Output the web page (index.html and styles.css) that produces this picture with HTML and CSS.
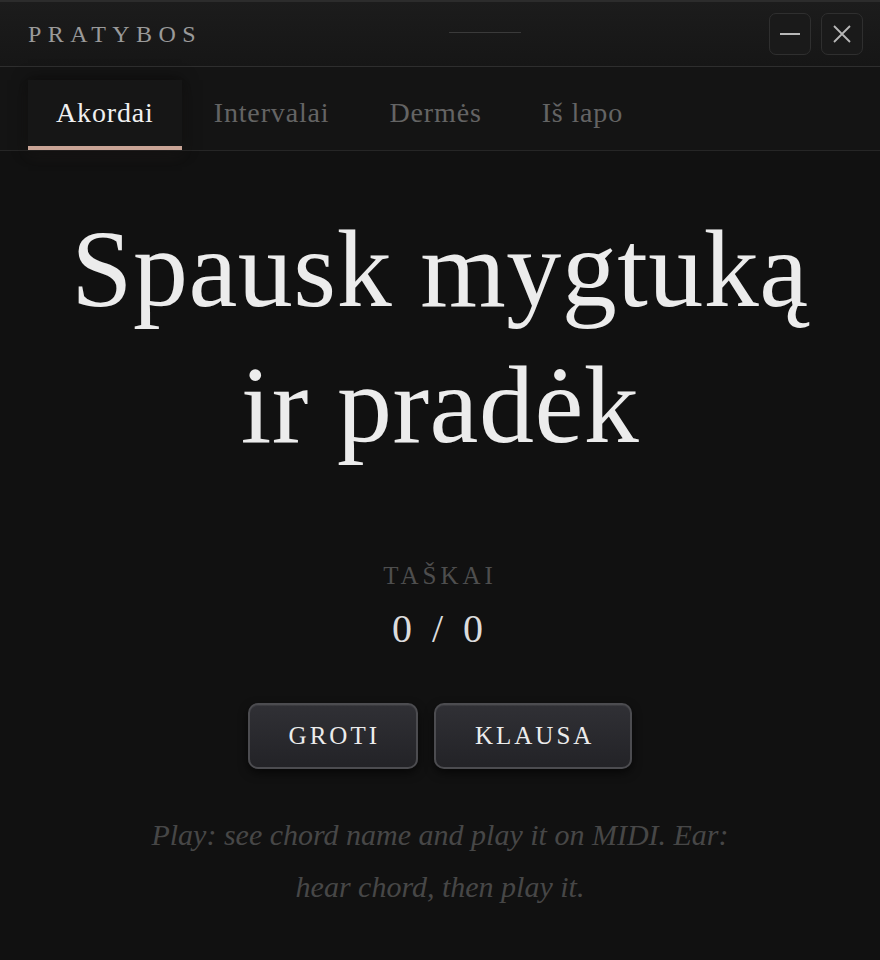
FILE: index.html
```html
<!DOCTYPE html>
<html lang="lt">
<head>
<meta charset="utf-8">
<title>Pratybos</title>
<link rel="stylesheet" href="styles.css">
</head>
<body>
<div class="window">
  <header class="titlebar">
    <div class="app-title">PRATYBOS</div>
    <div class="drag"><span class="drag-line"></span></div>
    <div class="win-controls">
      <button class="win-btn" aria-label="Minimize">
        <svg width="22" height="22" viewBox="0 0 22 22"><line x1="1" y1="11" x2="21" y2="11" stroke="#b8b8b8" stroke-width="2"/></svg>
      </button>
      <button class="win-btn" aria-label="Close">
        <svg width="22" height="22" viewBox="0 0 22 22"><path d="M3 3 L19 19 M19 3 L3 19" stroke="#b8b8b8" stroke-width="1.8" fill="none"/></svg>
      </button>
    </div>
  </header>
  <nav class="tabs">
    <div class="tab active">Akordai</div>
    <div class="tab">Intervalai</div>
    <div class="tab">Dermės</div>
    <div class="tab">Iš lapo</div>
  </nav>
  <main class="content">
    <h1 class="prompt">Spausk mygtuką<br>ir pradėk</h1>
    <div class="score">
      <div class="score-label">TAŠKAI</div>
      <div class="score-value">0 / 0</div>
    </div>
    <div class="actions">
      <button class="action">GROTI</button>
      <button class="action">KLAUSA</button>
    </div>
    <p class="hint">Play: see chord name and play it on MIDI. Ear: hear chord, then play it.</p>
  </main>
</div>
</body>
</html>
```
FILE: styles.css
```css
* { box-sizing: border-box; }
html, body {
  margin: 0;
  padding: 0;
  background: #111111;
  height: 100%;
}
body {
  font-family: "Liberation Serif", "Times New Roman", serif;
  color: #e8e8e8;
}
.window {
  min-height: 960px;
  background: #111111;
  border-top: 2px solid #2c2c2c;
  display: flex;
  flex-direction: column;
}
.titlebar {
  height: 65px;
  display: flex;
  align-items: center;
  padding: 0 17px 0 28px;
  background: linear-gradient(180deg, #1c1c1c 0%, #161616 100%);
  border-bottom: 1px solid #2e2e2e;
}
.app-title {
  font-size: 24px;
  letter-spacing: 6.4px;
  color: #9a9a9a;
}
.drag {
  flex: 1;
  display: flex;
  justify-content: center;
}
.drag-line {
  display: block;
  width: 72px;
  height: 1px;
  background: #3a3a3a;
  margin-top: -2px;
}
.win-controls {
  display: flex;
  gap: 10px;
}
.win-btn {
  width: 42px;
  height: 42px;
  border: 1px solid #2f2f2f;
  border-radius: 7px;
  background: #1a1a1a;
  display: flex;
  align-items: center;
  justify-content: center;
  padding: 0;
}
.tabs {
  display: flex;
  gap: 4px;
  padding: 13px 28px 0;
  background: #141414;
  border-bottom: 1px solid #262626;
}
.tab {
  height: 70px;
  padding: 0 28px 1px;
  display: flex;
  align-items: center;
  font-size: 28px;
  letter-spacing: 0.85px;
  color: #646464;
  border-bottom: 4px solid transparent;
}
.tab.active {
  color: #f0f0f0;
  background: #161616;
  border-bottom-color: #c9a496;
  box-shadow: 0 0 14px rgba(0,0,0,0.55), 0 6px 14px rgba(201,164,150,0.06);
}
.content {
  flex: 1;
  display: flex;
  flex-direction: column;
  align-items: center;
  padding-top: 50px;
}
.prompt {
  margin: 0;
  font-weight: normal;
  font-size: 110px;
  line-height: 136px;
  text-align: center;
  color: #ececec;
  letter-spacing: 0.5px;
}
.score {
  margin-top: 88px;
  display: flex;
  flex-direction: column;
  align-items: center;
}
.score-label {
  font-size: 25px;
  letter-spacing: 4px;
  color: #4e4e4e;
  line-height: 30px;
}
.score-value {
  font-size: 40px;
  letter-spacing: 5px;
  color: #dcdcdc;
  line-height: 56px;
  margin-top: 10px;
}
.actions {
  display: flex;
  gap: 16px;
  margin-top: 46px;
}
.action {
  font-family: "Liberation Serif", "Times New Roman", serif;
  height: 66px;
  padding: 0 36px 0 39px;
  font-size: 25px;
  letter-spacing: 3px;
  color: #ececec;
  border: 2px solid #4c4c50;
  border-radius: 10px;
  background: linear-gradient(180deg, #303035 0%, #232327 100%);
  box-shadow: inset 0 1px 0 rgba(255,255,255,0.06), 0 4px 10px rgba(0,0,0,0.6);
}
.hint {
  margin: 40px 0 0;
  max-width: 600px;
  text-align: center;
  font-style: italic;
  font-size: 30px;
  line-height: 52px;
  color: #474747;
}
```
